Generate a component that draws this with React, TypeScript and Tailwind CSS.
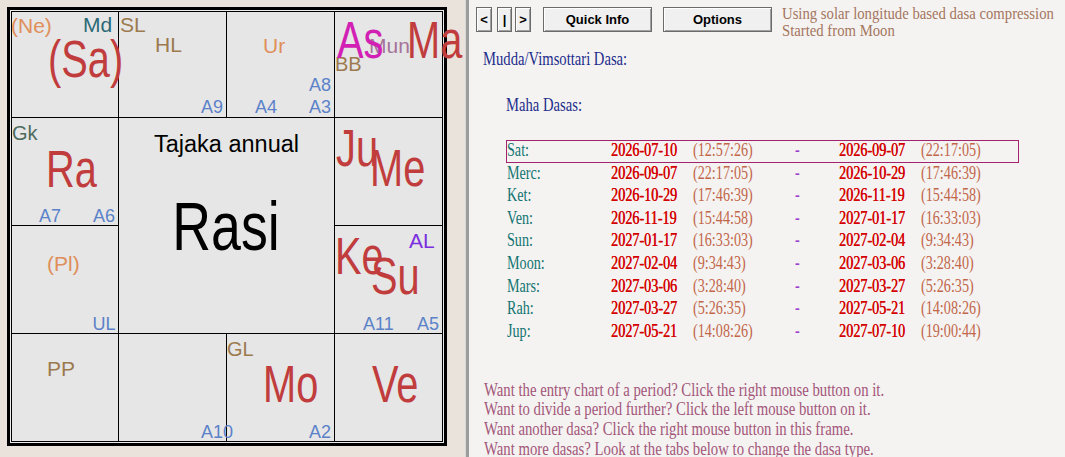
import React from "react";

type Label = { t: string; c: string };

// Planet and point labels on the annual chart, in the chart's own coordinates.
const BIG = "text-[51px] origin-left scale-x-[0.78]";
const RED = "text-[#c13d3d]";
const BLUE = "text-[18px] text-[#5b82c9]";
const BROWN = "text-[#9c7a4e]";
const ORANGE = "text-[#e08e5a]";

const labels: Label[] = [
  { t: "(Ne)", c: `left-[4px] top-[8px] text-[21px] ${ORANGE}` },
  { t: "Md", c: "left-[76px] top-[7px] text-[21px] text-[#2b6a76]" },
  { t: "(Sa)", c: `left-[41px] top-[27px] ${BIG} ${RED}` },
  { t: "SL", c: `left-[113px] top-[7px] text-[21px] ${BROWN}` },
  { t: "HL", c: `left-[148px] top-[27px] text-[21px] ${BROWN}` },
  { t: "A9", c: `left-[194px] top-[91px] ${BLUE}` },
  { t: "Ur", c: `left-[256px] top-[27.5px] text-[21px] ${ORANGE}` },
  { t: "A4", c: `left-[248px] top-[91px] ${BLUE}` },
  { t: "A3", c: `left-[302px] top-[91px] ${BLUE}` },
  { t: "A8", c: `left-[302px] top-[68.5px] ${BLUE}` },
  { t: "BB", c: `left-[328px] top-[47px] text-[20px] ${BROWN}` },
  { t: "Mun", c: "left-[362px] top-[27.5px] text-[21px] text-[#a5739a]" },
  { t: "As", c: `left-[330px] top-[8px] ${BIG} text-[#d21fb4]` },
  { t: "Ma", c: `left-[400px] top-[8px] ${BIG} ${RED}` },
  { t: "Gk", c: "left-[5px] top-[115.5px] text-[20px] text-[#4d6b5d]" },
  { t: "Ra", c: `left-[39px] top-[136.5px] ${BIG} ${RED}` },
  { t: "A7", c: `left-[32px] top-[199.5px] ${BLUE}` },
  { t: "A6", c: `left-[86px] top-[199.5px] ${BLUE}` },
  { t: "Ju", c: `left-[329px] top-[116px] ${BIG} ${RED}` },
  { t: "Me", c: `left-[363px] top-[136px] ${BIG} ${RED}` },
  { t: "(Pl)", c: `left-[40px] top-[245.7px] text-[21px] ${ORANGE}` },
  { t: "UL", c: `left-[85.6px] top-[307.8px] ${BLUE}` },
  { t: "AL", c: "left-[402px] top-[222.5px] text-[21px] text-[#7b2ee0]" },
  { t: "Ke", c: `left-[328px] top-[224px] ${BIG} ${RED}` },
  { t: "Su", c: `left-[364px] top-[244px] ${BIG} ${RED}` },
  { t: "A11", c: `left-[356px] top-[307.8px] ${BLUE}` },
  { t: "A5", c: `left-[410px] top-[307.8px] ${BLUE}` },
  { t: "PP", c: `left-[40px] top-[351px] text-[21px] ${BROWN}` },
  { t: "GL", c: `left-[220px] top-[332px] text-[20px] ${BROWN}` },
  { t: "Mo", c: `left-[256px] top-[352px] ${BIG} ${RED}` },
  { t: "Ve", c: `left-[365px] top-[352px] ${BIG} ${RED}` },
  { t: "A10", c: `left-[194px] top-[415.5px] ${BLUE}` },
  { t: "A2", c: `left-[302px] top-[415.5px] ${BLUE}` },
];

function Chart() {
  const outer = Array.from({ length: 12 });
  return (
    <div className="relative w-[440px] h-[439px] font-['Liberation_Sans',Arial,sans-serif]">
      <div className="w-full h-full border-[3px] border-black bg-[#ececec] p-px">
        <div className="grid grid-cols-[106px_107px_107px_107px] grid-rows-[105px_107px_107px_107px] gap-px bg-black border border-black">
          {outer.map((_, i) => (
            <div key={i} className="bg-[#e6e6e6]" />
          ))}
          <div className="col-start-2 row-start-2 col-span-2 row-span-2 bg-[#e6e6e6] flex flex-col items-center text-black">
            <div className="mt-[14.9px] text-[23.5px] leading-none whitespace-nowrap">Tajaka annual</div>
            <div className="mt-[35.3px] text-[68px] leading-none whitespace-nowrap scale-x-[0.79]">Rasi</div>
          </div>
        </div>
      </div>
      {labels.map((l) => (
        <span key={l.t} className={`absolute whitespace-nowrap leading-none ${l.c}`}>
          {l.t}
        </span>
      ))}
    </div>
  );
}

function Btn({ w, children, className = "" }: { w: string; children: React.ReactNode; className?: string }) {
  return (
    <div
      className={`h-[25px] ${w} shrink-0 flex items-center justify-center border border-[#6b6b6b] bg-[#f0f0f0] shadow-[inset_1px_1px_0_#ffffff,inset_-1px_-1px_0_#a0a0a0] font-['Liberation_Sans',Arial,sans-serif] font-bold text-[13px] leading-none text-black ${className}`}
    >
      {children}
    </div>
  );
}

const rows = [
  ["Sat:", "2026-07-10", "(12:57:26)", "2026-09-07", "(22:17:05)"],
  ["Merc:", "2026-09-07", "(22:17:05)", "2026-10-29", "(17:46:39)"],
  ["Ket:", "2026-10-29", "(17:46:39)", "2026-11-19", "(15:44:58)"],
  ["Ven:", "2026-11-19", "(15:44:58)", "2027-01-17", "(16:33:03)"],
  ["Sun:", "2027-01-17", "(16:33:03)", "2027-02-04", "(9:34:43)"],
  ["Moon:", "2027-02-04", "(9:34:43)", "2027-03-06", "(3:28:40)"],
  ["Mars:", "2027-03-06", "(3:28:40)", "2027-03-27", "(5:26:35)"],
  ["Rah:", "2027-03-27", "(5:26:35)", "2027-05-21", "(14:08:26)"],
  ["Jup:", "2027-05-21", "(14:08:26)", "2027-07-10", "(19:00:44)"],
];

const help = [
  "Want the entry chart of a period? Click the right mouse button on it.",
  "Want to divide a period further? Click the left mouse button on it.",
  "Want another dasa? Click the right mouse button in this frame.",
  "Want more dasas? Look at the tabs below to change the dasa type.",
];

const cell = "inline-block origin-left scale-x-[0.745] whitespace-nowrap";
const date = "text-[#d40000] [text-shadow:0.45px_0_0_#d40000]";

function DasaPanel() {
  return (
    <div className="flex-1 h-full bg-[#f4f3f1] font-['Liberation_Serif','Times_New_Roman',serif] flex flex-col">
      <div className="h-[32px] shrink-0 pt-[7px] pl-[7px] flex items-start">
        <Btn w="w-[16px]">&lt;</Btn>
        <Btn w="w-[15px]" className="ml-[5px]">|</Btn>
        <Btn w="w-[16px]" className="ml-[3px]">&gt;</Btn>
        <Btn w="w-[109px]" className="ml-[12px]">Quick Info</Btn>
        <Btn w="w-[109px]" className="ml-[11px]">Options</Btn>
        <div className="ml-[10px] -mt-[2px] text-[16px] leading-[17px] text-[#a57560] origin-left scale-x-[0.92] whitespace-nowrap">
          <div>Using solar longitude based dasa compression</div>
          <div>Started from Moon</div>
        </div>
      </div>

      <div className="mt-[15.6px] pl-[14px] h-[22px] text-[19px] leading-[22px] text-[#1c2c8c]">
        <div className="origin-left scale-x-[0.77] whitespace-nowrap">Mudda/Vimsottari Dasa:</div>
      </div>

      <div className="mt-[24px] pl-[37px] h-[22px] text-[19px] leading-[22px] text-[#1c2c8c]">
        <div className="origin-left scale-x-[0.77] whitespace-nowrap">Maha Dasas:</div>
      </div>

      <div className="mt-[23.4px] ml-[37px] w-[513px] text-[19px]">
        {rows.map((r, i) => (
          <div
            key={r[0]}
            className="relative grid grid-cols-[104px_82px_102px_44px_82px_1fr] h-[22.6px] leading-[22.6px] pl-px"
          >
            {i === 0 && <span className="absolute inset-x-0 top-px h-[23px] border border-[#a3246e]" />}
            <span className={`${cell} text-[#137373]`}>{r[0]}</span>
            <span className={`${cell} ${date}`}>{r[1]}</span>
            <span className={`${cell} text-[#c2664a]`}>{r[2]}</span>
            <span className={`${cell} font-bold text-[#9b40cf]`}>-</span>
            <span className={`${cell} ${date}`}>{r[3]}</span>
            <span className={`${cell} text-[#c2664a]`}>{r[4]}</span>
          </div>
        ))}
      </div>

      <div className="mt-[37.3px] pl-[15px] text-[19px] leading-[19.7px] text-[#a3567a]">
        {help.map((h) => (
          <div key={h} className="origin-left scale-x-[0.776] whitespace-nowrap">
            {h}
          </div>
        ))}
      </div>
    </div>
  );
}

export default function App() {
  return (
    <div className="w-[1065px] h-[457px] flex overflow-hidden bg-[#f4f3f1]">
      <div className="w-[465px] h-full shrink-0 bg-[#e9e3dc] pt-[7px] pl-[7px]">
        <Chart />
      </div>
      <div className="w-px h-full shrink-0 bg-[#d8d8d8]" />
      <div className="w-[3px] h-full shrink-0 bg-[#9c9c9c]" />
      <DasaPanel />
    </div>
  );
}
